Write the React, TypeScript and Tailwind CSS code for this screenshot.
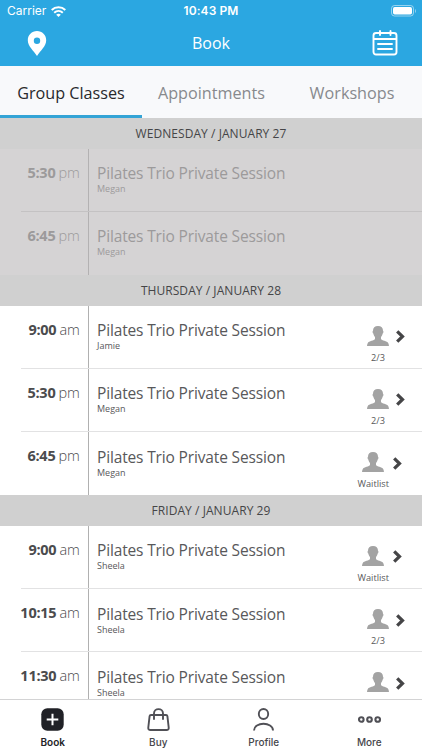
type Session = {
    time: string;
    period: string;
    staff: string;
    status?: string;
};

type Day = {
    label: string;
    past?: boolean;
    sessions: Session[];
};

const days: Day[] = [
    {
        label: "WEDNESDAY / JANUARY 27",
        past: true,
        sessions: [
            { time: "5:30", period: "pm", staff: "Megan" },
            { time: "6:45", period: "pm", staff: "Megan" },
        ],
    },
    {
        label: "THURSDAY / JANUARY 28",
        sessions: [
            { time: "9:00", period: "am", staff: "Jamie", status: "2/3" },
            { time: "5:30", period: "pm", staff: "Megan", status: "2/3" },
            { time: "6:45", period: "pm", staff: "Megan", status: "Waitlist" },
        ],
    },
    {
        label: "FRIDAY / JANUARY 29",
        sessions: [
            { time: "9:00", period: "am", staff: "Sheela", status: "Waitlist" },
            { time: "10:15", period: "am", staff: "Sheela", status: "2/3" },
            { time: "11:30", period: "am", staff: "Sheela" },
        ],
    },
];

function PersonIcon() {
    return (
        <svg className="h-5 w-[22px]" viewBox="0 0 22 20" fill="#a3a3a3">
            <path d="M11 0C7.700 0 6 2 6 4.700C5.300 4.900 5.500 7 6.300 7.500C6.700 9.300 7.500 10.300 8 11V13.100C7.500 14.800 1.800 15 .7 17.200C.2 18.200 0 20 0 20H22C22 20 21.800 18.200 21.300 17.200C20.200 15 14.500 14.800 14 13.100V11C14.500 10.300 15.300 9.300 15.700 7.500C16.500 7 16.700 4.900 16 4.700C16 2 14.300 0 11 0Z" />
        </svg>
    );
}

function SessionRow({ session, past }: { session: Session; past?: boolean }) {
    return (
        <div className="group relative flex h-[63.25px]">
            <div className={`flex w-[89px] shrink-0 justify-end gap-[3px] border-r pt-[14px] pr-[8.500px] text-[14.500px] leading-[20px] ${past ? "border-[#b3b1b2] text-[#9c9a9b]" : "border-[#b0b0b0] text-[#4b4b4d]"}`}>
                <span className="font-bold tracking-[-0.25px]">{session.time}</span>
                <span className="font-light tracking-[-0.2px]">{session.period}</span>
            </div>
            <div className={`flex-1 pt-[14.500px] pl-2 ${past ? "text-[#9c9a9b]" : "text-[#58585a]"}`}>
                <div className="text-[15.500px] leading-[20px] tracking-[-0.15px] whitespace-nowrap">Pilates Trio Private Session</div>
                <div className="text-[9px] leading-[11px]">{session.staff}</div>
            </div>
            {!past && (
                <div className="mr-[17px] flex shrink-0">
                    <div className={`flex flex-col items-center ${session.status === "Waitlist" ? "pt-[20px]" : "w-[22px] pt-[20px]"}`}>
                        <div className={session.status === "Waitlist" ? "mr-[1px]" : ""}>
                            <PersonIcon />
                        </div>
                        <span className="mt-[6px] text-[9.200px] leading-[12px] text-[#58585a]">{session.status}</span>
                    </div>
                    <svg className={`mt-[24.500px] h-[13px] w-[9px] ${session.status === "Waitlist" ? "mr-[3px] ml-[4px]" : "ml-[7px]"}`} viewBox="0 0 9 13" fill="none" stroke="#454547" strokeWidth="3.200">
                        <path d="M1.200 1.300L6.500 6.500L1.200 11.700" />
                    </svg>
                </div>
            )}
            <div className={`absolute right-0 bottom-0 left-[21px] h-px group-last:hidden ${past ? "bg-[#c4c2c3]" : "bg-[#e2e2e3]"}`} />
        </div>
    );
}

export default function App() {
    return (
        <div className="flex h-[750px] w-[422px] flex-col overflow-hidden bg-white font-['Open_Sans',sans-serif]">
            {/* STATUS BAR AND TITLE */}
            <header className="h-[65.500px] shrink-0 bg-[#2ba7e1] text-white">
                <div className="grid h-[22px] grid-cols-3 items-center font-['Inter',sans-serif] text-[12px]">
                    <div className="flex items-center gap-[5px] pl-[7px]">
                        <span>Carrier</span>
                        <svg className="h-[11px] w-[15px]" viewBox="0 0 15 11" fill="none" stroke="white" strokeWidth="2">
                            <path d="M.7 4C4.500 .3 10.500 .3 14.300 4" />
                            <path d="M3.200 6.700C5.700 4.400 9.300 4.400 11.800 6.700" />
                            <path d="M5.200 8.700C6.500 7.500 8.500 7.500 9.800 8.700L7.500 11Z" fill="white" stroke="none" />
                        </svg>
                    </div>
                    <span className="text-center font-semibold tracking-[0.1px]">10:43 PM</span>
                    <svg className="mr-[5px] h-[12px] w-[26px] justify-self-end" viewBox="0 0 26 12" fill="none">
                        <rect x=".5" y=".5" width="22" height="10.500" rx="3" stroke="white" strokeOpacity=".5" />
                        <rect x="2" y="2" width="19" height="7.500" rx="1.700" fill="white" />
                        <path d="M24 4V8C25.300 7.500 25.300 4.500 24 4Z" fill="white" fillOpacity=".5" />
                    </svg>
                </div>
                <div className="grid h-[42px] grid-cols-3 items-center">
                    <svg className="ml-[27px] h-[25px] w-[20px]" viewBox="0 0 20 25" fill="white">
                        <path fillRule="evenodd" d="M10 0C4.800 0 .8 4 .8 9.200C.8 15.300 6.500 19.500 10 25C13.500 19.500 19.200 15.300 19.200 9.200C19.200 4 15.200 0 10 0ZM10 6.500A3.200 3.200 0 1 1 10 12.900A3.200 3.200 0 1 1 10 6.500Z" />
                    </svg>
                    <h1 className="text-center text-[16px] leading-[22px]">Book</h1>
                    <svg className="mr-[24px] h-[26px] w-[26px] justify-self-end" viewBox="0 0 26 26" fill="none" stroke="white" strokeWidth="1.900" strokeLinecap="round">
                        <rect x="1.500" y="3" width="23" height="21.500" rx="2.500" />
                        <path d="M8 1V5M18.500 1V5M2 9H24M6 14H20M6 19H20" />
                    </svg>
                </div>
            </header>

            {/* CLASS TYPE TABS */}
            <nav className="grid h-[52.500px] shrink-0 grid-cols-[142px_139px_141px] bg-[#f8f9fb] text-center text-[16.200px] leading-[54px] text-[#87898d]">
                <div className="h-[52.500px] border-b-[3px] border-[#34a4d6] text-[#28292c]">Group Classes</div>
                <div>Appointments</div>
                <div className="pl-[1px]">Workshops</div>
            </nav>

            {/* SCHEDULE */}
            <main className="min-h-0 flex-1 overflow-hidden">
                {days.map((day) => (
                    <section key={day.label} className={day.past ? "bg-[#d5d3d4]" : "bg-white"}>
                        <h2 className="h-[30.500px] bg-[#d0d0d0] text-center text-[12px] leading-[31px] tracking-[0.06px] text-[#454547]">
                            {day.label}
                        </h2>
                        {day.sessions.map((session) => (
                            <SessionRow key={session.time} session={session} past={day.past} />
                        ))}
                    </section>
                ))}
            </main>

            {/* BOTTOM NAVIGATION */}
            <footer className="grid h-[51px] shrink-0 grid-cols-4 border-t border-[#d3d3d4] bg-white text-center font-['Inter',sans-serif] text-[10px] leading-[12px] text-[#46464b]">
                <div className="flex flex-col items-center pt-[8px] font-semibold text-[#222327]">
                    <svg className="mb-[5px] h-[23px] w-[23px]" viewBox="0 0 23 23" fill="none">
                        <rect x=".3" y=".3" width="22.400" height="22.400" rx="6" fill="#202126" />
                        <path d="M11.500 5.700V17.300M5.700 11.500H17.300" stroke="white" strokeWidth="2" />
                    </svg>
                    Book
                </div>
                <div className="flex flex-col items-center pt-[8px] font-medium">
                    <svg className="mb-[5px] h-[23px] w-[23px]" viewBox="0 0 23 23" fill="none" stroke="#505056" strokeWidth="1.900" strokeLinecap="round">
                        <path d="M4 7H19Q20.200 7 20.400 8.200L21.700 19.500Q22 22 19.500 22H3.500Q1 22 1.300 19.500L2.600 8.200Q2.800 7 4 7Z" />
                        <path d="M7 11V5.500C7 -.3 16 -.3 16 5.500V11" />
                    </svg>
                    Buy
                </div>
                <div className="flex flex-col items-center pt-[8px] font-medium">
                    <svg className="mb-[5px] h-[23px] w-[23px]" viewBox="0 0 23 23" fill="none" stroke="#505056" strokeWidth="1.900">
                        <ellipse cx="11.500" cy="6" rx="4.700" ry="5" />
                        <path d="M2 22.500C2 13.500 21 13.500 21 22.500" />
                    </svg>
                    Profile
                </div>
                <div className="flex flex-col items-center pt-[8px] font-medium">
                    <svg className="mb-[5px] h-[23px] w-[23px]" viewBox="0 0 23 23" fill="none" stroke="#505056" strokeWidth="2.100">
                        <circle cx="3.300" cy="11.500" r="2.300" />
                        <circle cx="11.500" cy="11.500" r="2.300" />
                        <circle cx="19.700" cy="11.500" r="2.300" />
                    </svg>
                    More
                </div>
            </footer>
        </div>
    );
}
